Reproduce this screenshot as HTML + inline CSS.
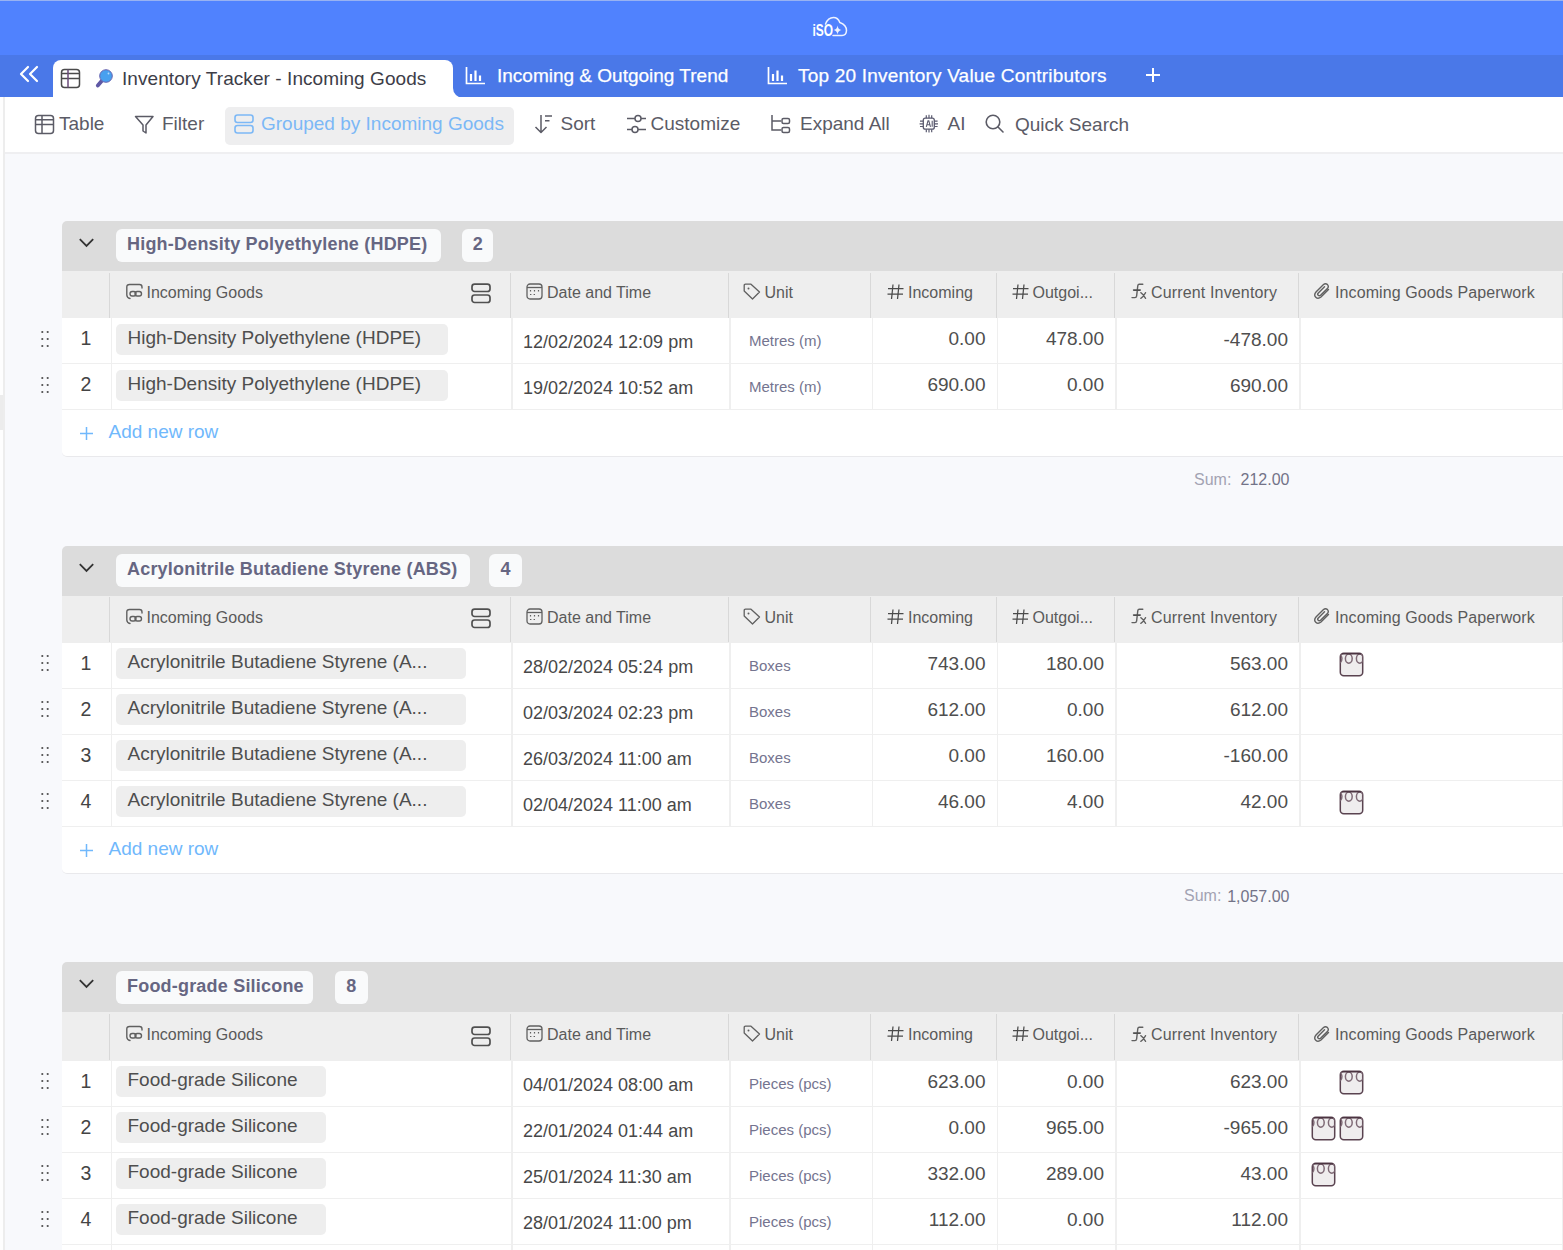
<!DOCTYPE html>
<html><head><meta charset="utf-8">
<style>
*{box-sizing:border-box;margin:0;padding:0}
html,body{width:1563px;height:1250px;overflow:hidden;background:#f8f9fc;font-family:"Liberation Sans",sans-serif;position:relative}
.a{position:absolute;white-space:nowrap}
#topbar{position:absolute;left:0;top:0;width:1563px;height:55px;background:#5082fe}
#tabbar{position:absolute;left:0;top:55px;width:1563px;height:42.5px;background:#4a78e8}
#tabrest{position:absolute;left:453px;top:55px;width:1110px;height:42.5px;background:#4a78e8;border-radius:0 0 0 10px}
#tabfill{position:absolute;left:440px;top:80px;width:30px;height:18px;background:#fff}
#tableft{position:absolute;left:0;top:55px;width:53px;height:42px;background:#4a78e8}
#tabact{position:absolute;left:53px;top:60px;width:400px;height:38px;background:#fff;border-radius:8px 8px 0 0}
.tabt{font-size:19px;color:#fff;line-height:22px;-webkit-text-stroke:0.25px #fff}
#toolbar{position:absolute;left:3px;top:97px;width:1560px;height:57px;background:#fff;border-bottom:2px solid #efeff1}
#lstrip{position:absolute;left:0;top:97px;width:3px;height:1153px;background:#fefefe}
#lhandle{position:absolute;left:0;top:395px;width:3px;height:35px;background:#ececec}
#leftline{position:absolute;left:3px;top:97px;width:1.5px;height:1153px;background:#ededed}
.tb{font-size:19px;color:#5b5b66;line-height:22px;top:113px}
</style>
<style>
.gh{position:absolute;left:62px;width:1501px;height:50px;background:#dcdcdc;border-radius:5px 0 0 0}
.lp{position:absolute;left:116px;height:33px;background:#f9fafb;border-radius:6px;font-weight:700;font-size:18px;color:#666682;line-height:30px;padding-bottom:3px;padding-left:11px;letter-spacing:0.2px;white-space:nowrap}
.cp{position:absolute;width:31px;height:33px;background:#f9fafb;border-radius:6px;font-weight:700;font-size:18px;color:#666682;line-height:30px;padding-bottom:3px;text-align:center}
.ch{position:absolute;left:62px;width:1501px;height:47px;background:#eeeeee}
.vd{position:absolute;width:1px;background:#d8d8d8}
.rw{position:absolute;left:62px;width:1501px;height:46px;background:#fff;border-bottom:1.5px solid #efefef}
.rd{position:absolute;width:1.5px;background:#efefef}
.ar{position:absolute;left:62px;width:1501px;height:47px;background:#fff;border-bottom:1px solid #e9e9ec;border-radius:0 0 0 5px}
.ht{position:absolute;font-size:16px;color:#5a5a5a;line-height:18px;white-space:nowrap}
.pl{position:absolute;left:116px;height:31px;background:#eeeeee;border-radius:5px;font-size:19px;color:#4e4e4e;line-height:31px;padding-left:11.5px;white-space:nowrap}
.rn{position:absolute;left:62px;width:48px;text-align:center;font-size:19.5px;color:#444;line-height:20px}
.dt{position:absolute;left:523px;font-size:18px;color:#484848;line-height:20px;white-space:nowrap}
.un{position:absolute;left:749px;font-size:15px;color:#74748f;line-height:18px;white-space:nowrap}
.nm{position:absolute;font-size:19px;color:#4e4e4e;line-height:20px;text-align:right;white-space:nowrap}
.an{position:absolute;left:108.5px;font-size:19px;color:#70b8fc;line-height:20px;white-space:nowrap}
.sl{position:absolute;font-size:16px;color:#a3a3b3;line-height:18px;white-space:nowrap}
.sv{position:absolute;font-size:16px;color:#737388;line-height:18px;white-space:nowrap}
</style>
</head>
<body>
<div id="topbar"></div>
<div class="a" style="left:0;top:0;width:1563px;height:1px;background:#98b2f2"></div>
<div id="tabbar"></div>

<div id="tabact"></div>
<div id="tabfill"></div>
<div id="tabrest"></div>
<!-- logo -->
<svg class="a" style="left:808px;top:14px" width="44" height="26" viewBox="0 0 44 26">
  <path d="M17.5 10 Q20 3.5 25.5 3.5 Q30 3.5 31.8 8.5 Q38.5 11 38.5 16.5 Q38.3 21.5 34 21.5 L25 21.5" fill="none" stroke="#fff" stroke-width="1.5" stroke-linejoin="round" stroke-linecap="round" opacity="0.9"/>
  <text x="4.5" y="22.3" font-family="Liberation Sans" font-weight="700" font-size="16" fill="#fff" textLength="20.5" lengthAdjust="spacingAndGlyphs">iSO</text>
  <path d="M29.5 11.5 Q30 15.5 33.5 16 Q30 16.5 29.5 20.5 Q29 16.5 25.5 16 Q29 15.5 29.5 11.5Z" fill="#fff" opacity="0.9"/>
</svg>
<!-- collapse << -->
<svg class="a" style="left:17px;top:64px" width="24" height="20" viewBox="0 0 24 20">
  <path d="M11 3 L4 10 L11 17 M20 3 L13 10 L20 17" fill="none" stroke="#fff" stroke-width="2.2" stroke-linecap="round" stroke-linejoin="round"/>
</svg>
<!-- active tab content -->
<svg class="a" style="left:60px;top:68px" width="21" height="21" viewBox="0 0 21 21">
  <rect x="1.5" y="1.5" width="18" height="18" rx="3" fill="none" stroke="#4a4a4a" stroke-width="1.5"/>
  <path d="M1.5 5.5H19.5M1.5 10.5H19.5" stroke="#4a4a4a" stroke-width="1.5"/>
  <path d="M8 1.5V19.5" stroke="#6a4a7a" stroke-width="1.5"/>
</svg>
<svg class="a" style="left:94px;top:68px" width="22" height="21" viewBox="0 0 22 21">
  <path d="M8.3 12.3 L3.8 17.6" stroke="#5f58a5" stroke-width="3.8" stroke-linecap="round"/>
  <circle cx="12" cy="8" r="6.3" fill="#48a0ef" stroke="#6a64b0" stroke-width="1"/>
  <circle cx="14.5" cy="5.5" r="0.9" fill="#b8dcfa"/>
</svg>
<div class="a tabt" style="left:122px;top:67.7px;color:#3d3d48;-webkit-text-stroke:0;letter-spacing:0.07px">Inventory Tracker - Incoming Goods</div>
<!-- other tabs -->
<svg class="a" style="left:465px;top:66px" width="21" height="19" viewBox="0 0 21 19">
  <path d="M1.5 1 V17.5 H20" fill="none" stroke="#fff" stroke-width="1.7"/>
  <path d="M6 8V15M10.5 4.5V15M15 9.5V15" stroke="#fff" stroke-width="2.2"/>
</svg>
<div class="a tabt" style="left:497px;top:64.7px">Incoming &amp; Outgoing Trend</div>
<svg class="a" style="left:767px;top:66px" width="21" height="19" viewBox="0 0 21 19">
  <path d="M1.5 1 V17.5 H20" fill="none" stroke="#fff" stroke-width="1.7"/>
  <path d="M6 8V15M10.5 4.5V15M15 9.5V15" stroke="#fff" stroke-width="2.2"/>
</svg>
<div class="a tabt" style="left:798px;top:64.7px;letter-spacing:0.2px">Top 20 Inventory Value Contributors</div>
<svg class="a" style="left:1145px;top:67px" width="16" height="16" viewBox="0 0 16 16">
  <path d="M8 1V15M1 8H15" stroke="#fff" stroke-width="2"/>
</svg>
<!-- toolbar -->
<div id="toolbar"></div>
<div id="lstrip"></div><div id="lhandle"></div><div id="leftline"></div>
<svg class="a" style="left:34px;top:114px" width="21" height="21" viewBox="0 0 21 21">
  <rect x="1.5" y="1.5" width="18" height="18" rx="3" fill="none" stroke="#5b5b66" stroke-width="1.5"/>
  <path d="M1.5 5.7H19.5M1.5 10.5H19.5M8 1.5V19.5" stroke="#5b5b66" stroke-width="1.5"/>
</svg>
<div class="a tb" style="left:59px">Table</div>
<svg class="a" style="left:134px;top:114px" width="21" height="21" viewBox="0 0 21 21">
  <path d="M1.5 2.5 H19 L12 11 V19 L9 17 V11 Z" fill="none" stroke="#5b5b66" stroke-width="1.5" stroke-linejoin="round"/>
</svg>
<div class="a tb" style="left:162px">Filter</div>
<div class="a" style="left:224.5px;top:106.5px;width:289px;height:38px;background:#eeeeef;border-radius:5px"></div>
<svg class="a" style="left:233px;top:113px" width="22" height="22" viewBox="0 0 22 22">
  <rect x="2" y="2" width="18" height="7.5" rx="2.5" fill="none" stroke="#7cb8f6" stroke-width="1.6"/>
  <rect x="2" y="12.5" width="18" height="7.5" rx="2.5" fill="none" stroke="#7cb8f6" stroke-width="1.6"/>
</svg>
<div class="a tb" style="left:261px;color:#7cb8f6">Grouped by Incoming Goods</div>
<svg class="a" style="left:533px;top:113px" width="21" height="21" viewBox="0 0 21 21">
  <path d="M8 2V19.5M2.5 14L8 19.5L13.5 14" fill="none" stroke="#5b5b66" stroke-width="1.5" stroke-linejoin="round"/>
  <path d="M12 3H19M12 7.7H16.5" stroke="#5b5b66" stroke-width="1.5"/>
</svg>
<div class="a tb" style="left:560.5px">Sort</div>
<svg class="a" style="left:626px;top:113px" width="21" height="21" viewBox="0 0 21 21">
  <path d="M1 5.4H9M15 5.4H20M1 16.4H6M12 16.4H20" stroke="#5b5b66" stroke-width="1.5"/>
  <circle cx="12" cy="5.4" r="3" fill="none" stroke="#5b5b66" stroke-width="1.5"/>
  <circle cx="9" cy="16.4" r="3" fill="none" stroke="#5b5b66" stroke-width="1.5"/>
</svg>
<div class="a tb" style="left:650.5px">Customize</div>
<svg class="a" style="left:770px;top:113px" width="22" height="22" viewBox="0 0 22 22">
  <path d="M2 2V17H11M2 8H11" fill="none" stroke="#5b5b66" stroke-width="1.5"/>
  <rect x="12" y="5.5" width="7.5" height="5" rx="1.5" fill="none" stroke="#5b5b66" stroke-width="1.5"/>
  <rect x="12" y="14.5" width="7.5" height="5" rx="1.5" fill="none" stroke="#5b5b66" stroke-width="1.5"/>
</svg>
<div class="a tb" style="left:800px">Expand All</div>
<svg class="a" style="left:914px;top:110px" width="30" height="28" viewBox="0 0 30 28">
  <rect x="9.3" y="8.2" width="11" height="11" rx="2" fill="none" stroke="#5b5b70" stroke-width="1.3"/>
  <path d="M12.3 5.2V8.2M15 4.8V8.2M17.7 5.2V8.2M12.3 19.2V22.2M15 19.2V22.6M17.7 19.2V22.2M6 11.2H9.3M5.6 13.8H9.3M6 16.5H9.3M20.3 11.2H23.6M20.3 13.8H24M20.3 16.5H23.6" stroke="#5b5b70" stroke-width="1.2"/>
  <path d="M12.3 16.8L14 10.8H14.8L16.5 16.8M12.9 14.8H15.9M18.2 10.8V16.8" fill="none" stroke="#5b5b70" stroke-width="1.1"/>
</svg>
<div class="a tb" style="left:947.5px">AI</div>
<svg class="a" style="left:984px;top:113px" width="21" height="21" viewBox="0 0 21 21">
  <circle cx="9" cy="9" r="6.8" fill="none" stroke="#5b5b66" stroke-width="1.6"/>
  <path d="M14 14L19 19" stroke="#5b5b66" stroke-width="1.6" stroke-linecap="round"/>
</svg>
<div class="a tb" style="left:1015px;top:114px">Quick Search</div>
<div class="gh" style="top:221px"></div>
<svg class="a" style="left:78px;top:237px" width="17" height="12" viewBox="0 0 17 12"><path d="M1.8 2.2 L8.5 8.9 L15.2 2.2" fill="none" stroke="#333" stroke-width="1.8"/></svg>
<div class="lp" style="top:229.3px;width:324.5px">High-Density Polyethylene (HDPE)</div>
<div class="cp" style="top:229.3px;left:462px;width:31.3px">2</div>
<div class="ch" style="top:271px;height:47px"></div>
<div class="vd" style="left:109px;top:272.5px;height:45px"></div>
<div class="vd" style="left:510px;top:272.5px;height:45px"></div>
<div class="vd" style="left:727.5px;top:272.5px;height:45px"></div>
<div class="vd" style="left:870px;top:272.5px;height:45px"></div>
<div class="vd" style="left:996px;top:272.5px;height:45px"></div>
<div class="vd" style="left:1113.5px;top:272.5px;height:45px"></div>
<div class="vd" style="left:1298px;top:272.5px;height:45px"></div>
<div class="vd" style="left:1561.5px;top:272.5px;height:45px"></div>
<svg class="a" style="left:125px;top:282.5px" width="19" height="17" viewBox="0 0 19 17"><path d="M5 15.5 Q2 15 1.8 12 V4 Q1.8 1.5 4.5 1.5 H14.5 Q17 1.5 17 4 V5" fill="none" stroke="#606060" stroke-width="1.4" stroke-linecap="round"/><rect x="5" y="8.5" width="6" height="4.5" rx="2.2" fill="none" stroke="#606060" stroke-width="1.4"/><rect x="10" y="8.5" width="6.5" height="4.5" rx="2.2" fill="none" stroke="#606060" stroke-width="1.4"/></svg>
<div class="ht" style="left:146.5px;top:283.5px">Incoming Goods</div>
<svg class="a" style="left:470px;top:283px" width="22" height="21" viewBox="0 0 22 21"><rect x="2" y="1.2" width="18" height="7.3" rx="2.6" fill="none" stroke="#505050" stroke-width="1.7"/><rect x="2" y="12" width="18" height="7.5" rx="2.6" fill="none" stroke="#505050" stroke-width="1.7"/></svg>
<svg class="a" style="left:526px;top:282.5px" width="17" height="17" viewBox="0 0 17 17"><rect x="1" y="1" width="15" height="15" rx="3" fill="none" stroke="#606060" stroke-width="1.3"/><path d="M1 4.5H16" stroke="#606060" stroke-width="1.3"/><path d="M4.5 7V8.6M8.5 7V8.6M12.5 7V8.6M4 11.5H5.4M7.6 11.5H9" stroke="#606060" stroke-width="1.2"/></svg>
<div class="ht" style="left:547px;top:283.5px">Date and Time</div>
<svg class="a" style="left:743px;top:282.5px" width="18" height="17" viewBox="0 0 18 17"><path d="M1.2 2.5 Q1.2 1.2 2.5 1.2 H8 L16.5 9 L9.5 16 L1.2 8 Z" fill="none" stroke="#606060" stroke-width="1.3" stroke-linejoin="round"/><circle cx="5.5" cy="5.5" r="1" fill="#606060"/></svg>
<div class="ht" style="left:764.5px;top:283.5px">Unit</div>
<svg class="a" style="left:886.5px;top:282.5px" width="17" height="17" viewBox="0 0 17 17"><path d="M6 1.5L4.5 16M12 1.5L10.5 16M1 5.5H16.5M0.5 11H16" stroke="#4a4a4a" stroke-width="1.25"/></svg>
<div class="ht" style="left:908px;top:283.5px">Incoming</div>
<svg class="a" style="left:1011.5px;top:282.5px" width="17" height="17" viewBox="0 0 17 17"><path d="M6 1.5L4.5 16M12 1.5L10.5 16M1 5.5H16.5M0.5 11H16" stroke="#4a4a4a" stroke-width="1.25"/></svg>
<div class="ht" style="left:1032.5px;top:283.5px">Outgoi...</div>
<svg class="a" style="left:1130px;top:282px" width="18" height="19" viewBox="0 0 18 19"><path d="M12.8 2.3 H9.2 Q8 2.3 7.8 3.6 L6.6 14.2 Q6.4 15.6 5 15.6 H2" fill="none" stroke="#606060" stroke-width="1.4" stroke-linecap="round" stroke-linejoin="round"/><path d="M3.6 8.1H10.2" stroke="#505050" stroke-width="1.6" stroke-linecap="round"/><path d="M10.8 10.6 Q13.2 12 15.6 16.4M15.6 10.6 Q13.2 15 10.8 16.4" fill="none" stroke="#606060" stroke-width="1.3" stroke-linecap="round"/></svg>
<div class="ht" style="left:1151px;top:283.5px;letter-spacing:0.15px">Current Inventory</div>
<svg class="a" style="left:1313px;top:282px" width="19" height="18" viewBox="0 0 19 18"><path d="M15.5 7.5 L8 15 Q5 17.5 2.8 15.2 Q0.5 13 3 10 L10.5 2.5 Q12.5 0.8 14.5 2.6 Q16.2 4.6 14.4 6.6 L7.5 13.3 Q6.3 14.4 5.2 13.3 Q4.1 12.2 5.3 11 L11.5 4.8" fill="none" stroke="#606060" stroke-width="1.4" stroke-linecap="round"/></svg>
<div class="ht" style="left:1335px;top:283.5px;letter-spacing:0.1px">Incoming Goods Paperwork</div>
<div class="rw" style="top:318px"></div>
<div class="rw" style="top:364px"></div>
<div class="rd" style="left:110.5px;top:318px;height:92px"></div>
<div class="rd" style="left:511px;top:318px;height:92px"></div>
<div class="rd" style="left:729px;top:318px;height:92px"></div>
<div class="rd" style="left:871.5px;top:318px;height:92px"></div>
<div class="rd" style="left:996.5px;top:318px;height:92px"></div>
<div class="rd" style="left:1115px;top:318px;height:92px"></div>
<div class="rd" style="left:1299px;top:318px;height:92px"></div>
<div class="rd" style="left:1561.5px;top:318px;height:92px"></div>
<svg class="a" style="left:40px;top:329.5px" width="10" height="18" viewBox="0 0 10 18"><circle cx="2.3" cy="2" r="1.1" fill="#505050"/><circle cx="2.3" cy="9" r="1.1" fill="#505050"/><circle cx="2.3" cy="16" r="1.1" fill="#505050"/><circle cx="7.7" cy="2" r="1.1" fill="#505050"/><circle cx="7.7" cy="9" r="1.1" fill="#505050"/><circle cx="7.7" cy="16" r="1.1" fill="#505050"/></svg>
<div class="rn" style="top:328.2px">1</div>
<div class="pl" style="top:323.5px;width:331.5px;padding-bottom:4px;line-height:27px">High-Density Polyethylene (HDPE)</div>
<div class="dt" style="top:332px">12/02/2024 12:09 pm</div>
<div class="un" style="top:332px">Metres (m)</div>
<div class="nm" style="top:329px;right:577.5px">0.00</div>
<div class="nm" style="top:329px;right:459px">478.00</div>
<div class="nm" style="top:329.5px;right:275px">-478.00</div>
<svg class="a" style="left:40px;top:375.5px" width="10" height="18" viewBox="0 0 10 18"><circle cx="2.3" cy="2" r="1.1" fill="#505050"/><circle cx="2.3" cy="9" r="1.1" fill="#505050"/><circle cx="2.3" cy="16" r="1.1" fill="#505050"/><circle cx="7.7" cy="2" r="1.1" fill="#505050"/><circle cx="7.7" cy="9" r="1.1" fill="#505050"/><circle cx="7.7" cy="16" r="1.1" fill="#505050"/></svg>
<div class="rn" style="top:374.2px">2</div>
<div class="pl" style="top:369.5px;width:331.5px;padding-bottom:4px;line-height:27px">High-Density Polyethylene (HDPE)</div>
<div class="dt" style="top:378px">19/02/2024 10:52 am</div>
<div class="un" style="top:378px">Metres (m)</div>
<div class="nm" style="top:375px;right:577.5px">690.00</div>
<div class="nm" style="top:375px;right:459px">0.00</div>
<div class="nm" style="top:375.5px;right:275px">690.00</div>
<div class="ar" style="top:410px"></div>
<svg class="a" style="left:79px;top:426px" width="15" height="15" viewBox="0 0 15 15"><path d="M7.5 1V14M1 7.5H14" stroke="#70b8fc" stroke-width="1.5"/></svg>
<div class="an" style="top:422.4px">Add new row</div>
<div class="sl" style="top:470.7px;left:1194px">Sum:</div>
<div class="sv" style="top:471px;right:273.5px">212.00</div>
<div class="gh" style="top:545.5px"></div>
<svg class="a" style="left:78px;top:561.5px" width="17" height="12" viewBox="0 0 17 12"><path d="M1.8 2.2 L8.5 8.9 L15.2 2.2" fill="none" stroke="#333" stroke-width="1.8"/></svg>
<div class="lp" style="top:553.8px;width:353.5px">Acrylonitrile Butadiene Styrene (ABS)</div>
<div class="cp" style="top:553.8px;left:489px;width:32.8px">4</div>
<div class="ch" style="top:595.5px;height:47px"></div>
<div class="vd" style="left:109px;top:597.0px;height:45px"></div>
<div class="vd" style="left:510px;top:597.0px;height:45px"></div>
<div class="vd" style="left:727.5px;top:597.0px;height:45px"></div>
<div class="vd" style="left:870px;top:597.0px;height:45px"></div>
<div class="vd" style="left:996px;top:597.0px;height:45px"></div>
<div class="vd" style="left:1113.5px;top:597.0px;height:45px"></div>
<div class="vd" style="left:1298px;top:597.0px;height:45px"></div>
<div class="vd" style="left:1561.5px;top:597.0px;height:45px"></div>
<svg class="a" style="left:125px;top:607.8px" width="19" height="17" viewBox="0 0 19 17"><path d="M5 15.5 Q2 15 1.8 12 V4 Q1.8 1.5 4.5 1.5 H14.5 Q17 1.5 17 4 V5" fill="none" stroke="#606060" stroke-width="1.4" stroke-linecap="round"/><rect x="5" y="8.5" width="6" height="4.5" rx="2.2" fill="none" stroke="#606060" stroke-width="1.4"/><rect x="10" y="8.5" width="6.5" height="4.5" rx="2.2" fill="none" stroke="#606060" stroke-width="1.4"/></svg>
<div class="ht" style="left:146.5px;top:608.8px">Incoming Goods</div>
<svg class="a" style="left:470px;top:608.3px" width="22" height="21" viewBox="0 0 22 21"><rect x="2" y="1.2" width="18" height="7.3" rx="2.6" fill="none" stroke="#505050" stroke-width="1.7"/><rect x="2" y="12" width="18" height="7.5" rx="2.6" fill="none" stroke="#505050" stroke-width="1.7"/></svg>
<svg class="a" style="left:526px;top:607.8px" width="17" height="17" viewBox="0 0 17 17"><rect x="1" y="1" width="15" height="15" rx="3" fill="none" stroke="#606060" stroke-width="1.3"/><path d="M1 4.5H16" stroke="#606060" stroke-width="1.3"/><path d="M4.5 7V8.6M8.5 7V8.6M12.5 7V8.6M4 11.5H5.4M7.6 11.5H9" stroke="#606060" stroke-width="1.2"/></svg>
<div class="ht" style="left:547px;top:608.8px">Date and Time</div>
<svg class="a" style="left:743px;top:607.8px" width="18" height="17" viewBox="0 0 18 17"><path d="M1.2 2.5 Q1.2 1.2 2.5 1.2 H8 L16.5 9 L9.5 16 L1.2 8 Z" fill="none" stroke="#606060" stroke-width="1.3" stroke-linejoin="round"/><circle cx="5.5" cy="5.5" r="1" fill="#606060"/></svg>
<div class="ht" style="left:764.5px;top:608.8px">Unit</div>
<svg class="a" style="left:886.5px;top:607.8px" width="17" height="17" viewBox="0 0 17 17"><path d="M6 1.5L4.5 16M12 1.5L10.5 16M1 5.5H16.5M0.5 11H16" stroke="#4a4a4a" stroke-width="1.25"/></svg>
<div class="ht" style="left:908px;top:608.8px">Incoming</div>
<svg class="a" style="left:1011.5px;top:607.8px" width="17" height="17" viewBox="0 0 17 17"><path d="M6 1.5L4.5 16M12 1.5L10.5 16M1 5.5H16.5M0.5 11H16" stroke="#4a4a4a" stroke-width="1.25"/></svg>
<div class="ht" style="left:1032.5px;top:608.8px">Outgoi...</div>
<svg class="a" style="left:1130px;top:607.3px" width="18" height="19" viewBox="0 0 18 19"><path d="M12.8 2.3 H9.2 Q8 2.3 7.8 3.6 L6.6 14.2 Q6.4 15.6 5 15.6 H2" fill="none" stroke="#606060" stroke-width="1.4" stroke-linecap="round" stroke-linejoin="round"/><path d="M3.6 8.1H10.2" stroke="#505050" stroke-width="1.6" stroke-linecap="round"/><path d="M10.8 10.6 Q13.2 12 15.6 16.4M15.6 10.6 Q13.2 15 10.8 16.4" fill="none" stroke="#606060" stroke-width="1.3" stroke-linecap="round"/></svg>
<div class="ht" style="left:1151px;top:608.8px;letter-spacing:0.15px">Current Inventory</div>
<svg class="a" style="left:1313px;top:607.3px" width="19" height="18" viewBox="0 0 19 18"><path d="M15.5 7.5 L8 15 Q5 17.5 2.8 15.2 Q0.5 13 3 10 L10.5 2.5 Q12.5 0.8 14.5 2.6 Q16.2 4.6 14.4 6.6 L7.5 13.3 Q6.3 14.4 5.2 13.3 Q4.1 12.2 5.3 11 L11.5 4.8" fill="none" stroke="#606060" stroke-width="1.4" stroke-linecap="round"/></svg>
<div class="ht" style="left:1335px;top:608.8px;letter-spacing:0.1px">Incoming Goods Paperwork</div>
<div class="rw" style="top:642.5px"></div>
<div class="rw" style="top:688.5px"></div>
<div class="rw" style="top:734.5px"></div>
<div class="rw" style="top:780.5px"></div>
<div class="rd" style="left:110.5px;top:642.5px;height:184px"></div>
<div class="rd" style="left:511px;top:642.5px;height:184px"></div>
<div class="rd" style="left:729px;top:642.5px;height:184px"></div>
<div class="rd" style="left:871.5px;top:642.5px;height:184px"></div>
<div class="rd" style="left:996.5px;top:642.5px;height:184px"></div>
<div class="rd" style="left:1115px;top:642.5px;height:184px"></div>
<div class="rd" style="left:1299px;top:642.5px;height:184px"></div>
<div class="rd" style="left:1561.5px;top:642.5px;height:184px"></div>
<svg class="a" style="left:40px;top:654.0px" width="10" height="18" viewBox="0 0 10 18"><circle cx="2.3" cy="2" r="1.1" fill="#505050"/><circle cx="2.3" cy="9" r="1.1" fill="#505050"/><circle cx="2.3" cy="16" r="1.1" fill="#505050"/><circle cx="7.7" cy="2" r="1.1" fill="#505050"/><circle cx="7.7" cy="9" r="1.1" fill="#505050"/><circle cx="7.7" cy="16" r="1.1" fill="#505050"/></svg>
<div class="rn" style="top:652.7px">1</div>
<div class="pl" style="top:648.0px;width:350px;padding-bottom:4px;line-height:27px">Acrylonitrile Butadiene Styrene (A...</div>
<div class="dt" style="top:656.5px">28/02/2024 05:24 pm</div>
<div class="un" style="top:656.5px">Boxes</div>
<div class="nm" style="top:653.5px;right:577.5px">743.00</div>
<div class="nm" style="top:653.5px;right:459px">180.00</div>
<div class="nm" style="top:654.0px;right:275px">563.00</div>
<svg class="a" style="left:1339px;top:651.8px" width="25" height="25" viewBox="0 0 25 25"><defs><clipPath id="dc"><rect x="1.3" y="1.3" width="22.4" height="22.4" rx="3.5"/></clipPath></defs><rect x="1.3" y="1.3" width="22.4" height="22.4" rx="3.5" fill="#efedee" stroke="#5a4350" stroke-width="1.5"/><g clip-path="url(#dc)"><ellipse cx="9.8" cy="6.6" rx="3.4" ry="4.6" fill="none" stroke="#7f6a76" stroke-width="1.5"/><ellipse cx="20.8" cy="6.6" rx="3.4" ry="4.6" fill="none" stroke="#7f6a76" stroke-width="1.5"/><ellipse cx="-0.5" cy="6.6" rx="3.4" ry="4.6" fill="none" stroke="#7f6a76" stroke-width="1.5"/></g><path d="M3 1.8H22" stroke="#4a3340" stroke-width="1.4"/></svg>
<svg class="a" style="left:40px;top:700.0px" width="10" height="18" viewBox="0 0 10 18"><circle cx="2.3" cy="2" r="1.1" fill="#505050"/><circle cx="2.3" cy="9" r="1.1" fill="#505050"/><circle cx="2.3" cy="16" r="1.1" fill="#505050"/><circle cx="7.7" cy="2" r="1.1" fill="#505050"/><circle cx="7.7" cy="9" r="1.1" fill="#505050"/><circle cx="7.7" cy="16" r="1.1" fill="#505050"/></svg>
<div class="rn" style="top:698.7px">2</div>
<div class="pl" style="top:694.0px;width:350px;padding-bottom:4px;line-height:27px">Acrylonitrile Butadiene Styrene (A...</div>
<div class="dt" style="top:702.5px">02/03/2024 02:23 pm</div>
<div class="un" style="top:702.5px">Boxes</div>
<div class="nm" style="top:699.5px;right:577.5px">612.00</div>
<div class="nm" style="top:699.5px;right:459px">0.00</div>
<div class="nm" style="top:700.0px;right:275px">612.00</div>
<svg class="a" style="left:40px;top:746.0px" width="10" height="18" viewBox="0 0 10 18"><circle cx="2.3" cy="2" r="1.1" fill="#505050"/><circle cx="2.3" cy="9" r="1.1" fill="#505050"/><circle cx="2.3" cy="16" r="1.1" fill="#505050"/><circle cx="7.7" cy="2" r="1.1" fill="#505050"/><circle cx="7.7" cy="9" r="1.1" fill="#505050"/><circle cx="7.7" cy="16" r="1.1" fill="#505050"/></svg>
<div class="rn" style="top:744.7px">3</div>
<div class="pl" style="top:740.0px;width:350px;padding-bottom:4px;line-height:27px">Acrylonitrile Butadiene Styrene (A...</div>
<div class="dt" style="top:748.5px">26/03/2024 11:00 am</div>
<div class="un" style="top:748.5px">Boxes</div>
<div class="nm" style="top:745.5px;right:577.5px">0.00</div>
<div class="nm" style="top:745.5px;right:459px">160.00</div>
<div class="nm" style="top:746.0px;right:275px">-160.00</div>
<svg class="a" style="left:40px;top:792.0px" width="10" height="18" viewBox="0 0 10 18"><circle cx="2.3" cy="2" r="1.1" fill="#505050"/><circle cx="2.3" cy="9" r="1.1" fill="#505050"/><circle cx="2.3" cy="16" r="1.1" fill="#505050"/><circle cx="7.7" cy="2" r="1.1" fill="#505050"/><circle cx="7.7" cy="9" r="1.1" fill="#505050"/><circle cx="7.7" cy="16" r="1.1" fill="#505050"/></svg>
<div class="rn" style="top:790.7px">4</div>
<div class="pl" style="top:786.0px;width:350px;padding-bottom:4px;line-height:27px">Acrylonitrile Butadiene Styrene (A...</div>
<div class="dt" style="top:794.5px">02/04/2024 11:00 am</div>
<div class="un" style="top:794.5px">Boxes</div>
<div class="nm" style="top:791.5px;right:577.5px">46.00</div>
<div class="nm" style="top:791.5px;right:459px">4.00</div>
<div class="nm" style="top:792.0px;right:275px">42.00</div>
<svg class="a" style="left:1339px;top:789.8px" width="25" height="25" viewBox="0 0 25 25"><defs><clipPath id="dc"><rect x="1.3" y="1.3" width="22.4" height="22.4" rx="3.5"/></clipPath></defs><rect x="1.3" y="1.3" width="22.4" height="22.4" rx="3.5" fill="#efedee" stroke="#5a4350" stroke-width="1.5"/><g clip-path="url(#dc)"><ellipse cx="9.8" cy="6.6" rx="3.4" ry="4.6" fill="none" stroke="#7f6a76" stroke-width="1.5"/><ellipse cx="20.8" cy="6.6" rx="3.4" ry="4.6" fill="none" stroke="#7f6a76" stroke-width="1.5"/><ellipse cx="-0.5" cy="6.6" rx="3.4" ry="4.6" fill="none" stroke="#7f6a76" stroke-width="1.5"/></g><path d="M3 1.8H22" stroke="#4a3340" stroke-width="1.4"/></svg>
<div class="ar" style="top:826.5px"></div>
<svg class="a" style="left:79px;top:842.5px" width="15" height="15" viewBox="0 0 15 15"><path d="M7.5 1V14M1 7.5H14" stroke="#70b8fc" stroke-width="1.5"/></svg>
<div class="an" style="top:838.9px">Add new row</div>
<div class="sl" style="top:887.2px;left:1184px">Sum:</div>
<div class="sv" style="top:887.5px;right:273.5px">1,057.00</div>
<div class="gh" style="top:962px"></div>
<svg class="a" style="left:78px;top:978px" width="17" height="12" viewBox="0 0 17 12"><path d="M1.8 2.2 L8.5 8.9 L15.2 2.2" fill="none" stroke="#333" stroke-width="1.8"/></svg>
<div class="lp" style="top:971.0999999999999px;width:197px">Food-grade Silicone</div>
<div class="cp" style="top:971.0999999999999px;left:335px;width:32.5px">8</div>
<div class="ch" style="top:1012px;height:48.5px"></div>
<div class="vd" style="left:109px;top:1013.5px;height:46.5px"></div>
<div class="vd" style="left:510px;top:1013.5px;height:46.5px"></div>
<div class="vd" style="left:727.5px;top:1013.5px;height:46.5px"></div>
<div class="vd" style="left:870px;top:1013.5px;height:46.5px"></div>
<div class="vd" style="left:996px;top:1013.5px;height:46.5px"></div>
<div class="vd" style="left:1113.5px;top:1013.5px;height:46.5px"></div>
<div class="vd" style="left:1298px;top:1013.5px;height:46.5px"></div>
<div class="vd" style="left:1561.5px;top:1013.5px;height:46.5px"></div>
<svg class="a" style="left:125px;top:1025.0px" width="19" height="17" viewBox="0 0 19 17"><path d="M5 15.5 Q2 15 1.8 12 V4 Q1.8 1.5 4.5 1.5 H14.5 Q17 1.5 17 4 V5" fill="none" stroke="#606060" stroke-width="1.4" stroke-linecap="round"/><rect x="5" y="8.5" width="6" height="4.5" rx="2.2" fill="none" stroke="#606060" stroke-width="1.4"/><rect x="10" y="8.5" width="6.5" height="4.5" rx="2.2" fill="none" stroke="#606060" stroke-width="1.4"/></svg>
<div class="ht" style="left:146.5px;top:1026.0px">Incoming Goods</div>
<svg class="a" style="left:470px;top:1025.5px" width="22" height="21" viewBox="0 0 22 21"><rect x="2" y="1.2" width="18" height="7.3" rx="2.6" fill="none" stroke="#505050" stroke-width="1.7"/><rect x="2" y="12" width="18" height="7.5" rx="2.6" fill="none" stroke="#505050" stroke-width="1.7"/></svg>
<svg class="a" style="left:526px;top:1025.0px" width="17" height="17" viewBox="0 0 17 17"><rect x="1" y="1" width="15" height="15" rx="3" fill="none" stroke="#606060" stroke-width="1.3"/><path d="M1 4.5H16" stroke="#606060" stroke-width="1.3"/><path d="M4.5 7V8.6M8.5 7V8.6M12.5 7V8.6M4 11.5H5.4M7.6 11.5H9" stroke="#606060" stroke-width="1.2"/></svg>
<div class="ht" style="left:547px;top:1026.0px">Date and Time</div>
<svg class="a" style="left:743px;top:1025.0px" width="18" height="17" viewBox="0 0 18 17"><path d="M1.2 2.5 Q1.2 1.2 2.5 1.2 H8 L16.5 9 L9.5 16 L1.2 8 Z" fill="none" stroke="#606060" stroke-width="1.3" stroke-linejoin="round"/><circle cx="5.5" cy="5.5" r="1" fill="#606060"/></svg>
<div class="ht" style="left:764.5px;top:1026.0px">Unit</div>
<svg class="a" style="left:886.5px;top:1025.0px" width="17" height="17" viewBox="0 0 17 17"><path d="M6 1.5L4.5 16M12 1.5L10.5 16M1 5.5H16.5M0.5 11H16" stroke="#4a4a4a" stroke-width="1.25"/></svg>
<div class="ht" style="left:908px;top:1026.0px">Incoming</div>
<svg class="a" style="left:1011.5px;top:1025.0px" width="17" height="17" viewBox="0 0 17 17"><path d="M6 1.5L4.5 16M12 1.5L10.5 16M1 5.5H16.5M0.5 11H16" stroke="#4a4a4a" stroke-width="1.25"/></svg>
<div class="ht" style="left:1032.5px;top:1026.0px">Outgoi...</div>
<svg class="a" style="left:1130px;top:1024.5px" width="18" height="19" viewBox="0 0 18 19"><path d="M12.8 2.3 H9.2 Q8 2.3 7.8 3.6 L6.6 14.2 Q6.4 15.6 5 15.6 H2" fill="none" stroke="#606060" stroke-width="1.4" stroke-linecap="round" stroke-linejoin="round"/><path d="M3.6 8.1H10.2" stroke="#505050" stroke-width="1.6" stroke-linecap="round"/><path d="M10.8 10.6 Q13.2 12 15.6 16.4M15.6 10.6 Q13.2 15 10.8 16.4" fill="none" stroke="#606060" stroke-width="1.3" stroke-linecap="round"/></svg>
<div class="ht" style="left:1151px;top:1026.0px;letter-spacing:0.15px">Current Inventory</div>
<svg class="a" style="left:1313px;top:1024.5px" width="19" height="18" viewBox="0 0 19 18"><path d="M15.5 7.5 L8 15 Q5 17.5 2.8 15.2 Q0.5 13 3 10 L10.5 2.5 Q12.5 0.8 14.5 2.6 Q16.2 4.6 14.4 6.6 L7.5 13.3 Q6.3 14.4 5.2 13.3 Q4.1 12.2 5.3 11 L11.5 4.8" fill="none" stroke="#606060" stroke-width="1.4" stroke-linecap="round"/></svg>
<div class="ht" style="left:1335px;top:1026.0px;letter-spacing:0.1px">Incoming Goods Paperwork</div>
<div class="rw" style="top:1060.5px"></div>
<div class="rw" style="top:1106.5px"></div>
<div class="rw" style="top:1152.5px"></div>
<div class="rw" style="top:1198.5px"></div>
<div class="rw" style="top:1244.5px"></div>
<div class="rd" style="left:110.5px;top:1060.5px;height:230px"></div>
<div class="rd" style="left:511px;top:1060.5px;height:230px"></div>
<div class="rd" style="left:729px;top:1060.5px;height:230px"></div>
<div class="rd" style="left:871.5px;top:1060.5px;height:230px"></div>
<div class="rd" style="left:996.5px;top:1060.5px;height:230px"></div>
<div class="rd" style="left:1115px;top:1060.5px;height:230px"></div>
<div class="rd" style="left:1299px;top:1060.5px;height:230px"></div>
<div class="rd" style="left:1561.5px;top:1060.5px;height:230px"></div>
<svg class="a" style="left:40px;top:1072.0px" width="10" height="18" viewBox="0 0 10 18"><circle cx="2.3" cy="2" r="1.1" fill="#505050"/><circle cx="2.3" cy="9" r="1.1" fill="#505050"/><circle cx="2.3" cy="16" r="1.1" fill="#505050"/><circle cx="7.7" cy="2" r="1.1" fill="#505050"/><circle cx="7.7" cy="9" r="1.1" fill="#505050"/><circle cx="7.7" cy="16" r="1.1" fill="#505050"/></svg>
<div class="rn" style="top:1070.7px">1</div>
<div class="pl" style="top:1066.0px;width:210px;padding-bottom:4px;line-height:27px">Food-grade Silicone</div>
<div class="dt" style="top:1074.5px">04/01/2024 08:00 am</div>
<div class="un" style="top:1074.5px">Pieces (pcs)</div>
<div class="nm" style="top:1071.5px;right:577.5px">623.00</div>
<div class="nm" style="top:1071.5px;right:459px">0.00</div>
<div class="nm" style="top:1072.0px;right:275px">623.00</div>
<svg class="a" style="left:1339px;top:1069.8px" width="25" height="25" viewBox="0 0 25 25"><defs><clipPath id="dc"><rect x="1.3" y="1.3" width="22.4" height="22.4" rx="3.5"/></clipPath></defs><rect x="1.3" y="1.3" width="22.4" height="22.4" rx="3.5" fill="#efedee" stroke="#5a4350" stroke-width="1.5"/><g clip-path="url(#dc)"><ellipse cx="9.8" cy="6.6" rx="3.4" ry="4.6" fill="none" stroke="#7f6a76" stroke-width="1.5"/><ellipse cx="20.8" cy="6.6" rx="3.4" ry="4.6" fill="none" stroke="#7f6a76" stroke-width="1.5"/><ellipse cx="-0.5" cy="6.6" rx="3.4" ry="4.6" fill="none" stroke="#7f6a76" stroke-width="1.5"/></g><path d="M3 1.8H22" stroke="#4a3340" stroke-width="1.4"/></svg>
<svg class="a" style="left:40px;top:1118.0px" width="10" height="18" viewBox="0 0 10 18"><circle cx="2.3" cy="2" r="1.1" fill="#505050"/><circle cx="2.3" cy="9" r="1.1" fill="#505050"/><circle cx="2.3" cy="16" r="1.1" fill="#505050"/><circle cx="7.7" cy="2" r="1.1" fill="#505050"/><circle cx="7.7" cy="9" r="1.1" fill="#505050"/><circle cx="7.7" cy="16" r="1.1" fill="#505050"/></svg>
<div class="rn" style="top:1116.7px">2</div>
<div class="pl" style="top:1112.0px;width:210px;padding-bottom:4px;line-height:27px">Food-grade Silicone</div>
<div class="dt" style="top:1120.5px">22/01/2024 01:44 am</div>
<div class="un" style="top:1120.5px">Pieces (pcs)</div>
<div class="nm" style="top:1117.5px;right:577.5px">0.00</div>
<div class="nm" style="top:1117.5px;right:459px">965.00</div>
<div class="nm" style="top:1118.0px;right:275px">-965.00</div>
<svg class="a" style="left:1311px;top:1115.8px" width="25" height="25" viewBox="0 0 25 25"><defs><clipPath id="dc"><rect x="1.3" y="1.3" width="22.4" height="22.4" rx="3.5"/></clipPath></defs><rect x="1.3" y="1.3" width="22.4" height="22.4" rx="3.5" fill="#efedee" stroke="#5a4350" stroke-width="1.5"/><g clip-path="url(#dc)"><ellipse cx="9.8" cy="6.6" rx="3.4" ry="4.6" fill="none" stroke="#7f6a76" stroke-width="1.5"/><ellipse cx="20.8" cy="6.6" rx="3.4" ry="4.6" fill="none" stroke="#7f6a76" stroke-width="1.5"/><ellipse cx="-0.5" cy="6.6" rx="3.4" ry="4.6" fill="none" stroke="#7f6a76" stroke-width="1.5"/></g><path d="M3 1.8H22" stroke="#4a3340" stroke-width="1.4"/></svg>
<svg class="a" style="left:1339px;top:1115.8px" width="25" height="25" viewBox="0 0 25 25"><defs><clipPath id="dc"><rect x="1.3" y="1.3" width="22.4" height="22.4" rx="3.5"/></clipPath></defs><rect x="1.3" y="1.3" width="22.4" height="22.4" rx="3.5" fill="#efedee" stroke="#5a4350" stroke-width="1.5"/><g clip-path="url(#dc)"><ellipse cx="9.8" cy="6.6" rx="3.4" ry="4.6" fill="none" stroke="#7f6a76" stroke-width="1.5"/><ellipse cx="20.8" cy="6.6" rx="3.4" ry="4.6" fill="none" stroke="#7f6a76" stroke-width="1.5"/><ellipse cx="-0.5" cy="6.6" rx="3.4" ry="4.6" fill="none" stroke="#7f6a76" stroke-width="1.5"/></g><path d="M3 1.8H22" stroke="#4a3340" stroke-width="1.4"/></svg>
<svg class="a" style="left:40px;top:1164.0px" width="10" height="18" viewBox="0 0 10 18"><circle cx="2.3" cy="2" r="1.1" fill="#505050"/><circle cx="2.3" cy="9" r="1.1" fill="#505050"/><circle cx="2.3" cy="16" r="1.1" fill="#505050"/><circle cx="7.7" cy="2" r="1.1" fill="#505050"/><circle cx="7.7" cy="9" r="1.1" fill="#505050"/><circle cx="7.7" cy="16" r="1.1" fill="#505050"/></svg>
<div class="rn" style="top:1162.7px">3</div>
<div class="pl" style="top:1158.0px;width:210px;padding-bottom:4px;line-height:27px">Food-grade Silicone</div>
<div class="dt" style="top:1166.5px">25/01/2024 11:30 am</div>
<div class="un" style="top:1166.5px">Pieces (pcs)</div>
<div class="nm" style="top:1163.5px;right:577.5px">332.00</div>
<div class="nm" style="top:1163.5px;right:459px">289.00</div>
<div class="nm" style="top:1164.0px;right:275px">43.00</div>
<svg class="a" style="left:1311px;top:1161.8px" width="25" height="25" viewBox="0 0 25 25"><defs><clipPath id="dc"><rect x="1.3" y="1.3" width="22.4" height="22.4" rx="3.5"/></clipPath></defs><rect x="1.3" y="1.3" width="22.4" height="22.4" rx="3.5" fill="#efedee" stroke="#5a4350" stroke-width="1.5"/><g clip-path="url(#dc)"><ellipse cx="9.8" cy="6.6" rx="3.4" ry="4.6" fill="none" stroke="#7f6a76" stroke-width="1.5"/><ellipse cx="20.8" cy="6.6" rx="3.4" ry="4.6" fill="none" stroke="#7f6a76" stroke-width="1.5"/><ellipse cx="-0.5" cy="6.6" rx="3.4" ry="4.6" fill="none" stroke="#7f6a76" stroke-width="1.5"/></g><path d="M3 1.8H22" stroke="#4a3340" stroke-width="1.4"/></svg>
<svg class="a" style="left:40px;top:1210.0px" width="10" height="18" viewBox="0 0 10 18"><circle cx="2.3" cy="2" r="1.1" fill="#505050"/><circle cx="2.3" cy="9" r="1.1" fill="#505050"/><circle cx="2.3" cy="16" r="1.1" fill="#505050"/><circle cx="7.7" cy="2" r="1.1" fill="#505050"/><circle cx="7.7" cy="9" r="1.1" fill="#505050"/><circle cx="7.7" cy="16" r="1.1" fill="#505050"/></svg>
<div class="rn" style="top:1208.7px">4</div>
<div class="pl" style="top:1204.0px;width:210px;padding-bottom:4px;line-height:27px">Food-grade Silicone</div>
<div class="dt" style="top:1212.5px">28/01/2024 11:00 pm</div>
<div class="un" style="top:1212.5px">Pieces (pcs)</div>
<div class="nm" style="top:1209.5px;right:577.5px">112.00</div>
<div class="nm" style="top:1209.5px;right:459px">0.00</div>
<div class="nm" style="top:1210.0px;right:275px">112.00</div>
</body></html>
